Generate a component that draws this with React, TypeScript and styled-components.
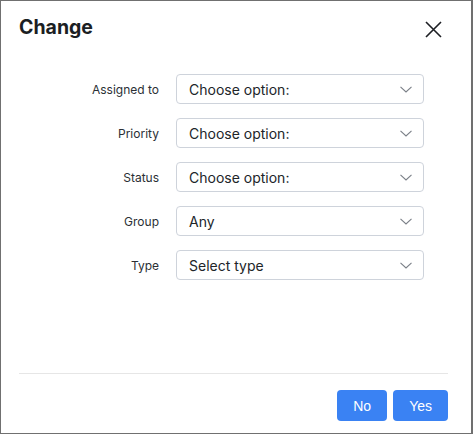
import React, { FC } from 'react'
import styled, { createGlobalStyle } from 'styled-components'

const GlobalStyle = createGlobalStyle`
  html, body {
    margin  : 0;
    padding : 0;
    background : #fff;
  }
  * { box-sizing : border-box; }
`

type Field = {
  label: string
  value: string
}

const fields: Field[] = [
  { label: 'Assigned to', value: 'Choose option:' },
  { label: 'Priority', value: 'Choose option:' },
  { label: 'Status', value: 'Choose option:' },
  { label: 'Group', value: 'Any' },
  { label: 'Type', value: 'Select type' },
]

const Chevron: FC = () => (
  <svg width='12' height='7' viewBox='0 0 12 7' fill='none'>
    <path d='M0.5 0.8 L6 6 L11.5 0.8' stroke='#7a7f87' strokeWidth='1.1' />
  </svg>
)

const CloseIcon: FC = () => (
  <svg width='17' height='17' viewBox='0 0 17 17' fill='none'>
    <path d='M1 1 L16 16 M16 1 L1 16' stroke='#1d1f24' strokeWidth='1.6' />
  </svg>
)

const App: FC = () => (
  <>
    <GlobalStyle/>
    <Modal>
      <Header>
        <Title>Change</Title>
        <CloseButton aria-label='Close'><CloseIcon/></CloseButton>
      </Header>
      <Form>
        {fields.map( f => (
          <React.Fragment key={f.label}>
            <Label>{f.label}</Label>
            <Select>
              <span>{f.value}</span>
              <Chevron/>
            </Select>
          </React.Fragment>
        ) )}
      </Form>
      <Footer>
        <Button>No</Button>
        <Button>Yes</Button>
      </Footer>
    </Modal>
  </>
)

export default App

const Modal = styled.div`
  width          : 473px;
  height         : 434px;
  border         : 1px solid #707070;
  border-right-width : 2px;
  display        : flex;
  flex-direction : column;
  font-family    : Inter, "Noto Sans", sans-serif;
  color          : #212529;
`

const Header = styled.div`
  display         : flex;
  align-items     : center;
  justify-content : space-between;
  padding         : 14px 29px 0 18px;
  height          : 38px;
`

const Title = styled.h1`
  margin      : 0;
  font-size   : 19.5px;
  font-weight : 700;
  color       : #1b1e23;
`

const CloseButton = styled.button`
  border     : 0;
  background : transparent;
  padding    : 0;
  display    : flex;
  cursor     : pointer;
  margin-top : 4px;
`

const Form = styled.div`
  display               : grid;
  grid-template-columns : 140px 248px;
  column-gap            : 17px;
  row-gap               : 14px;
  align-items           : center;
  padding               : 35px 0 0 18px;
  flex                  : 1;
  align-content         : start;
`

const Label = styled.label`
  text-align : right;
  font-size  : 12px;
  color      : #2b2f35;
`

const Select = styled.div`
  height          : 30px;
  border          : 1px solid #ced3db;
  border-radius   : 4px;
  display         : flex;
  align-items     : center;
  justify-content : space-between;
  padding         : 0 11px 0 12px;
  font-size       : 14px;
  color           : #212529;
`

const Footer = styled.div`
  margin          : 0 23px 0 18px;
  border-top      : 1px solid #e6e6e6;
  padding         : 16px 0 12px;
  display         : flex;
  justify-content : flex-end;
  gap             : 6px;
`

const Button = styled.button`
  height        : 31px;
  padding       : 0 16px;
  border        : 0;
  border-radius : 4px;
  background    : #3a82f3;
  color         : #fff;
  font-family   : "Liberation Sans", Arial, sans-serif;
  font-size     : 14px;
  cursor        : pointer;
`
